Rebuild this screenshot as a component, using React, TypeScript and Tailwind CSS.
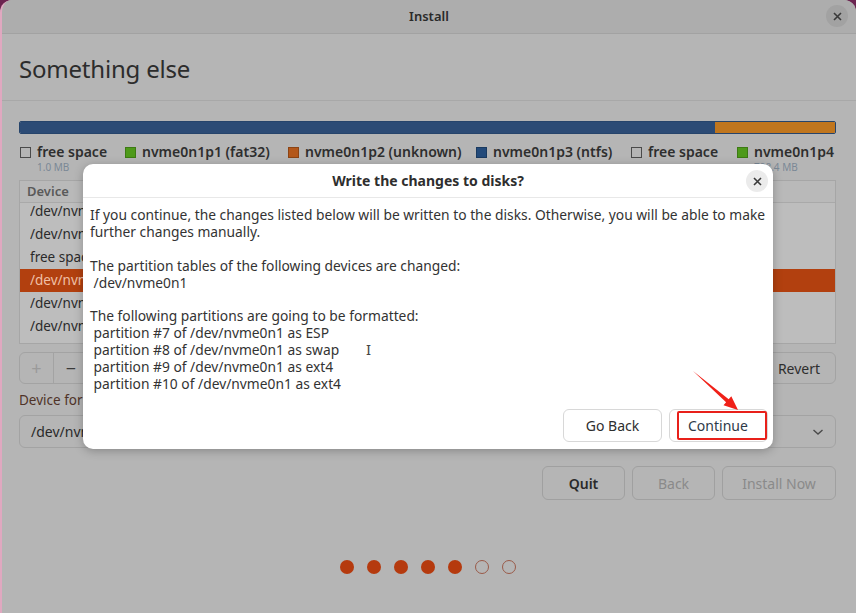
import React from "react";

const font = { fontFamily: '"Noto Sans", "Open Sans", sans-serif' };

type Legend = { label: string; size: string; swatch: string; width: string };

const legend: Legend[] = [
    { label: "free space", size: "1.0 MB", swatch: "border border-[#4a4a4a] bg-transparent", width: "w-[105px]" },
    { label: "nvme0n1p1 (fat32)", size: "", swatch: "bg-[#4e9a1a] border border-[#3d7a14]", width: "w-[163px]" },
    { label: "nvme0n1p2 (unknown)", size: "", swatch: "bg-[#b3571a] border border-[#8c4414]", width: "w-[188px]" },
    { label: "nvme0n1p3 (ntfs)", size: "", swatch: "bg-[#234a7a] border border-[#1a3a60]", width: "w-[155px]" },
    { label: "free space", size: "", swatch: "border border-[#4a4a4a] bg-transparent", width: "w-[106px]" },
    { label: "nvme0n1p4", size: "798.4 MB", swatch: "bg-[#4e9a1a] border border-[#3d7a14]", width: "w-[100px]" },
];

const rows = ["/dev/nvme0n1p1", "/dev/nvme0n1p2", "free space", "/dev/nvme0n1p5", "/dev/nvme0n1p6", "/dev/nvme0n1p7", "/dev/nvme0n1p8"];

const App: React.FC = () => {
    return (
        <div className="w-[856px] h-[613px] bg-[#6b2450] overflow-hidden relative" style={font}>
            {/* Window */}
            <div className="w-full h-full rounded-t-[12px] bg-[#b5b5b5] flex flex-col border-l-2 border-[#e0a8c0] overflow-hidden">
                {/* Title bar */}
                <div className="h-[34px] shrink-0 bg-[#adadad] border-b border-[#a2a2a2] flex items-center justify-center relative">
                    <span className="text-[13px] font-semibold text-[#2a2a2a]">Install</span>
                    <div className="absolute right-[8px] top-[5px] w-[22px] h-[22px] rounded-full bg-[#a2a2a2] flex items-center justify-center">
                        <svg width="9" height="9" viewBox="0 0 9 9" stroke="#3a3a3a" strokeWidth="1.6">
                            <path d="M1 1 L8 8 M8 1 L1 8" />
                        </svg>
                    </div>
                </div>

                {/* Page title */}
                <div className="h-[67px] shrink-0 pl-[17px] pt-[3px] flex items-center border-b border-[#a8a8a8]">
                    <h1 className="text-[24px] text-[#2c2c2c] font-normal tracking-[-0.2px]">Something else</h1>
                </div>

                <div className="pl-[17px] pr-[20px] pt-[20px] flex flex-col">
                    {/* Partition bar */}
                    <div className="h-[13px] flex rounded-[2px] overflow-hidden border border-[#26446b]">
                        <div className="flex-1 bg-[#2c4b75]" />
                        <div className="w-[120px] bg-[#c0761e]" />
                    </div>

                    {/* Legend */}
                    <div className="flex mt-[9px] h-[37px] pl-[1px] whitespace-nowrap">
                        {legend.map((l, i) => (
                            <div key={i} className={`flex flex-col shrink-0 ${l.width}`}>
                                <div className="flex items-center gap-[6px]">
                                    <div className={`w-[11px] h-[11px] ${l.swatch}`} />
                                    <span className="text-[14px] font-semibold text-[#2e2e2e] leading-[18px]">{l.label}</span>
                                </div>
                                <span className="text-[10px] text-[#7a8896] pl-[17px] leading-[12px]">{l.size}</span>
                            </div>
                        ))}
                    </div>

                    {/* Partition table */}
                    <div className="h-[164px] border border-[#a6a6a6] bg-[#bdbdbd] overflow-hidden flex flex-col">
                        <div className="h-[22px] shrink-0 relative z-[1] bg-[#b9b9b9] border-b border-[#a9a9a9] flex items-center px-[7px]">
                            <span className="text-[13px] font-semibold text-[#5a5a5a]">Device</span>
                        </div>
                        <div className="-mt-[3px]">
                            {rows.map((r, i) => (
                                <div
                                    key={i}
                                    className={`h-[23px] flex items-center pl-[10px] ${
                                        i === 3 ? "bg-[#b2400f] text-[#f0c0a8]" : "text-[#2a2a2a]"
                                    }`}
                                >
                                    <span className="w-[54px] overflow-hidden whitespace-nowrap text-[13.5px]">{r}</span>
                                </div>
                            ))}
                        </div>
                    </div>

                    {/* Table buttons */}
                    <div className="flex justify-between mt-[8px]">
                        <div className="flex h-[32px] border border-[#a3a3a3] rounded-[6px] overflow-hidden">
                            <div className="w-[34px] flex items-center justify-center text-[18px] text-[#9a9a9a] border-r border-[#a3a3a3]">+</div>
                            <div className="w-[34px] flex items-center justify-center text-[18px] text-[#3a3a3a]">−</div>
                        </div>
                        <div className="h-[32px] w-[74px] border border-[#a3a3a3] rounded-[6px] flex items-center justify-center text-[14px] text-[#2e2e2e]">
                            Revert
                        </div>
                    </div>

                    {/* Boot loader */}
                    <div className="mt-[6px] text-[13.5px] text-[#4f3328]">Device for boot loader installation:</div>
                    <div className="mt-[5px] h-[33px] border border-[#a3a3a3] rounded-[6px] flex items-center justify-between px-[11px]">
                        <span className="text-[14px] text-[#2a2a2a]">/dev/nvme0n1</span>
                        <svg width="12" height="8" viewBox="0 0 12 8" fill="none" stroke="#4a4a4a" strokeWidth="1.4">
                            <path d="M1.5 2 L6 6 L10.5 2" />
                        </svg>
                    </div>

                    {/* Nav buttons */}
                    <div className="flex justify-end gap-[7px] mt-[18px]">
                        <div className="h-[34px] w-[83px] border border-[#a0a0a0] rounded-[6px] flex items-center justify-center text-[14px] font-semibold text-[#2a2a2a]">Quit</div>
                        <div className="h-[34px] w-[83px] border border-[#a0a0a0] rounded-[6px] flex items-center justify-center text-[14px] text-[#8a8a8a]">Back</div>
                        <div className="h-[34px] w-[114px] border border-[#a0a0a0] rounded-[6px] flex items-center justify-center text-[14px] text-[#8a8a8a]">Install Now</div>
                    </div>

                    {/* Progress dots */}
                    <div className="flex justify-center gap-[13px] mt-[60px]">
                        {[0, 1, 2, 3, 4, 5, 6].map((d) => (
                            <div
                                key={d}
                                className={`w-[14px] h-[14px] rounded-full ${
                                    d < 5 ? "bg-[#b53a0e]" : "border-[1.5px] border-[#9a5a48]"
                                }`}
                            />
                        ))}
                    </div>
                </div>
            </div>

            {/* Dialog */}
            <div className="absolute z-20 left-[83px] top-[164px] w-[690px] h-[285px] bg-white rounded-[10px] shadow-[0_2px_10px_rgba(0,0,0,0.25)] flex flex-col">
                <div className="h-[34px] shrink-0 flex items-center justify-center relative border-b border-[#e8e8e8]">
                    <span className="text-[14px] font-bold text-[#2e2e2e]">Write the changes to disks?</span>
                    <div className="absolute right-[5px] top-[6px] w-[22px] h-[22px] rounded-full bg-[#ebebeb] flex items-center justify-center">
                        <svg width="9" height="9" viewBox="0 0 9 9" stroke="#3a3a3a" strokeWidth="1.6">
                            <path d="M1 1 L8 8 M8 1 L1 8" />
                        </svg>
                    </div>
                </div>
                <div className="px-[7px] pt-[8px] text-[13.8px] leading-[17px] text-[#333] whitespace-pre">
                    <p>If you continue, the changes listed below will be written to the disks. Otherwise, you will be able to make</p>
                    <p>further changes manually.</p>
                    <p className="mt-[17px]">The partition tables of the following devices are changed:</p>
                    <p> /dev/nvme0n1</p>
                    <p className="mt-[16px]">The following partitions are going to be formatted:</p>
                    <p> partition #7 of /dev/nvme0n1 as ESP</p>
                    <p> partition #8 of /dev/nvme0n1 as swap</p>
                    <p> partition #9 of /dev/nvme0n1 as ext4</p>
                    <p> partition #10 of /dev/nvme0n1 as ext4</p>
                </div>
                <div className="mt-auto mb-[7px] mr-[5px] flex justify-end gap-[7px]">
                    <div className="h-[33px] w-[99px] border border-[#d8d8d8] rounded-[6px] flex items-center justify-center text-[14px] text-[#2e2e2e]">Go Back</div>
                    <div className="h-[33px] w-[99px] border border-[#d8d8d8] rounded-[6px] flex items-center">
                        <div className="w-[91px] h-[29px] ml-[7px] border-2 border-[#e8201a] rounded-[2px] flex items-center pl-[9px] text-[14px] text-[#2e3a48]">
                            Continue
                        </div>
                    </div>
                </div>
            </div>

            {/* Text cursor */}
            <div className="absolute z-30 left-[366px] top-[342px] text-[15px] text-[#444] leading-none">I</div>

            {/* Red arrow annotation */}
            <svg className="absolute z-30 left-[686px] top-[365px]" width="60" height="52" viewBox="0 0 60 52">
                <polygon points="7,6 42.7,34.3 45.3,31.3 52,45 37.5,40.3 40.1,37.3" fill="#f02018" />
            </svg>
        </div>
    );
};

export default App;
